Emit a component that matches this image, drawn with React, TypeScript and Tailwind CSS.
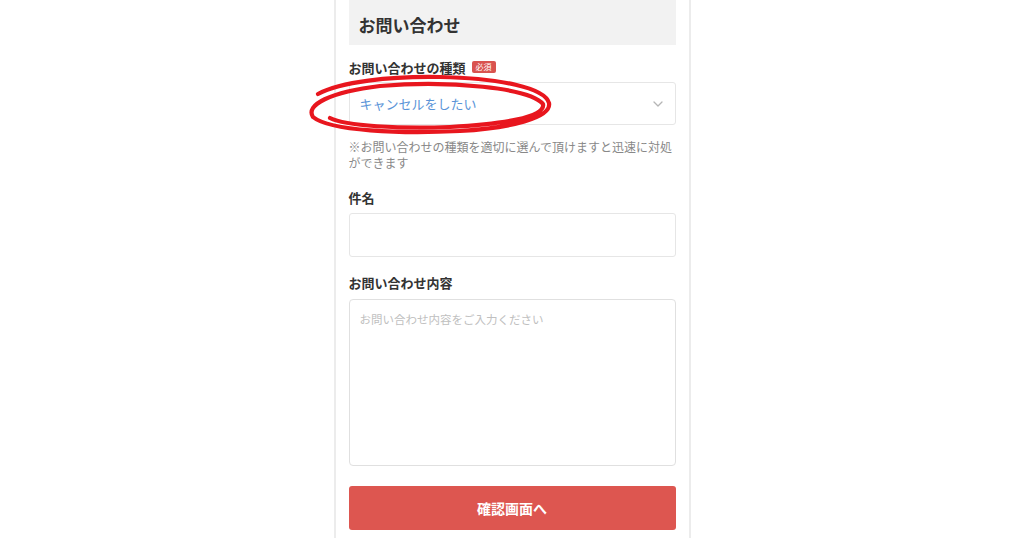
import React from "react";

const font = { fontFamily: '"Noto Sans CJK JP", "Noto Sans", sans-serif' };

export default function App() {
  return (
    <div className="relative w-[1024px] h-[538px] overflow-hidden bg-white" style={font}>
      <div className="mx-auto w-[357px] min-h-[538px] border-x-2 border-[#ececec] px-[13px]">
        <div className="h-[45px] bg-[#f2f2f2] flex items-center pl-[10px] pt-[4px]">
          <span className="text-[17px] font-bold text-[#333] leading-none">お問い合わせ</span>
        </div>

        <div className="mt-[13px] h-[18px] flex items-center">
          <span className="text-[13px] font-bold text-[#333] leading-none">お問い合わせの種類</span>
          <span className="ml-[6px] bg-[#d9534f] text-white text-[8px] leading-none px-[4px] py-[2px] rounded-[2px]">必須</span>
        </div>

        <div className="mt-[6px] h-[43px] border border-[#e6e6e6] rounded-[3px] flex items-center justify-between pl-[10px] pr-[12px]">
          <span className="text-[13px] text-[#5a94d8] leading-none">キャンセルをしたい</span>
          <svg width="10" height="6" viewBox="0 0 10 6" fill="none">
            <path d="M1 1 L5 5 L9 1" stroke="#b5b5b5" strokeWidth="1.3" strokeLinecap="round" strokeLinejoin="round" />
          </svg>
        </div>

        <p className="mt-[14px] text-[12px] leading-[16px] text-[#888]">
          ※お問い合わせの種類を適切に選んで頂けますと迅速に対処ができます
        </p>

        <div className="mt-[17px] h-[18px] flex items-center">
          <span className="text-[13px] font-bold text-[#333] leading-none">件名</span>
        </div>
        <div className="mt-[7px] h-[44px] border border-[#e6e6e6] rounded-[3px]" />

        <div className="mt-[16px] h-[18px] flex items-center">
          <span className="text-[13px] font-bold text-[#333] leading-none">お問い合わせ内容</span>
        </div>
        <div className="mt-[8px] h-[167px] border border-[#e0e0e0] rounded-[4px] px-[10px] pt-[5px]">
          <span className="text-[11.5px] text-[#c0c0c0] leading-none">お問い合わせ内容をご入力ください</span>
        </div>

        <div className="mt-[20px] h-[44px] bg-[#dd5650] rounded-[3px] flex items-center justify-center">
          <span className="text-[14px] font-bold text-white leading-none">確認画面へ</span>
        </div>
      </div>

      <svg
        className="absolute top-0 left-0 pointer-events-none"
        width="1024"
        height="538"
        viewBox="0 0 1024 538"
        fill="none"
      >
        <path
          d="M318 94 C340 82 390 76 440 77 C500 78 545 88 549 103 C552 118 510 128 460 131 C400 134 330 131 313 117 C305 105 330 92 380 86 C450 80 530 88 543 104 C546 118 500 124 450 127 C400 129 345 126 330 118"
          stroke="#e8161e"
          strokeWidth="4.2"
          strokeLinecap="round"
          strokeLinejoin="round"
        />
      </svg>
    </div>
  );
}
